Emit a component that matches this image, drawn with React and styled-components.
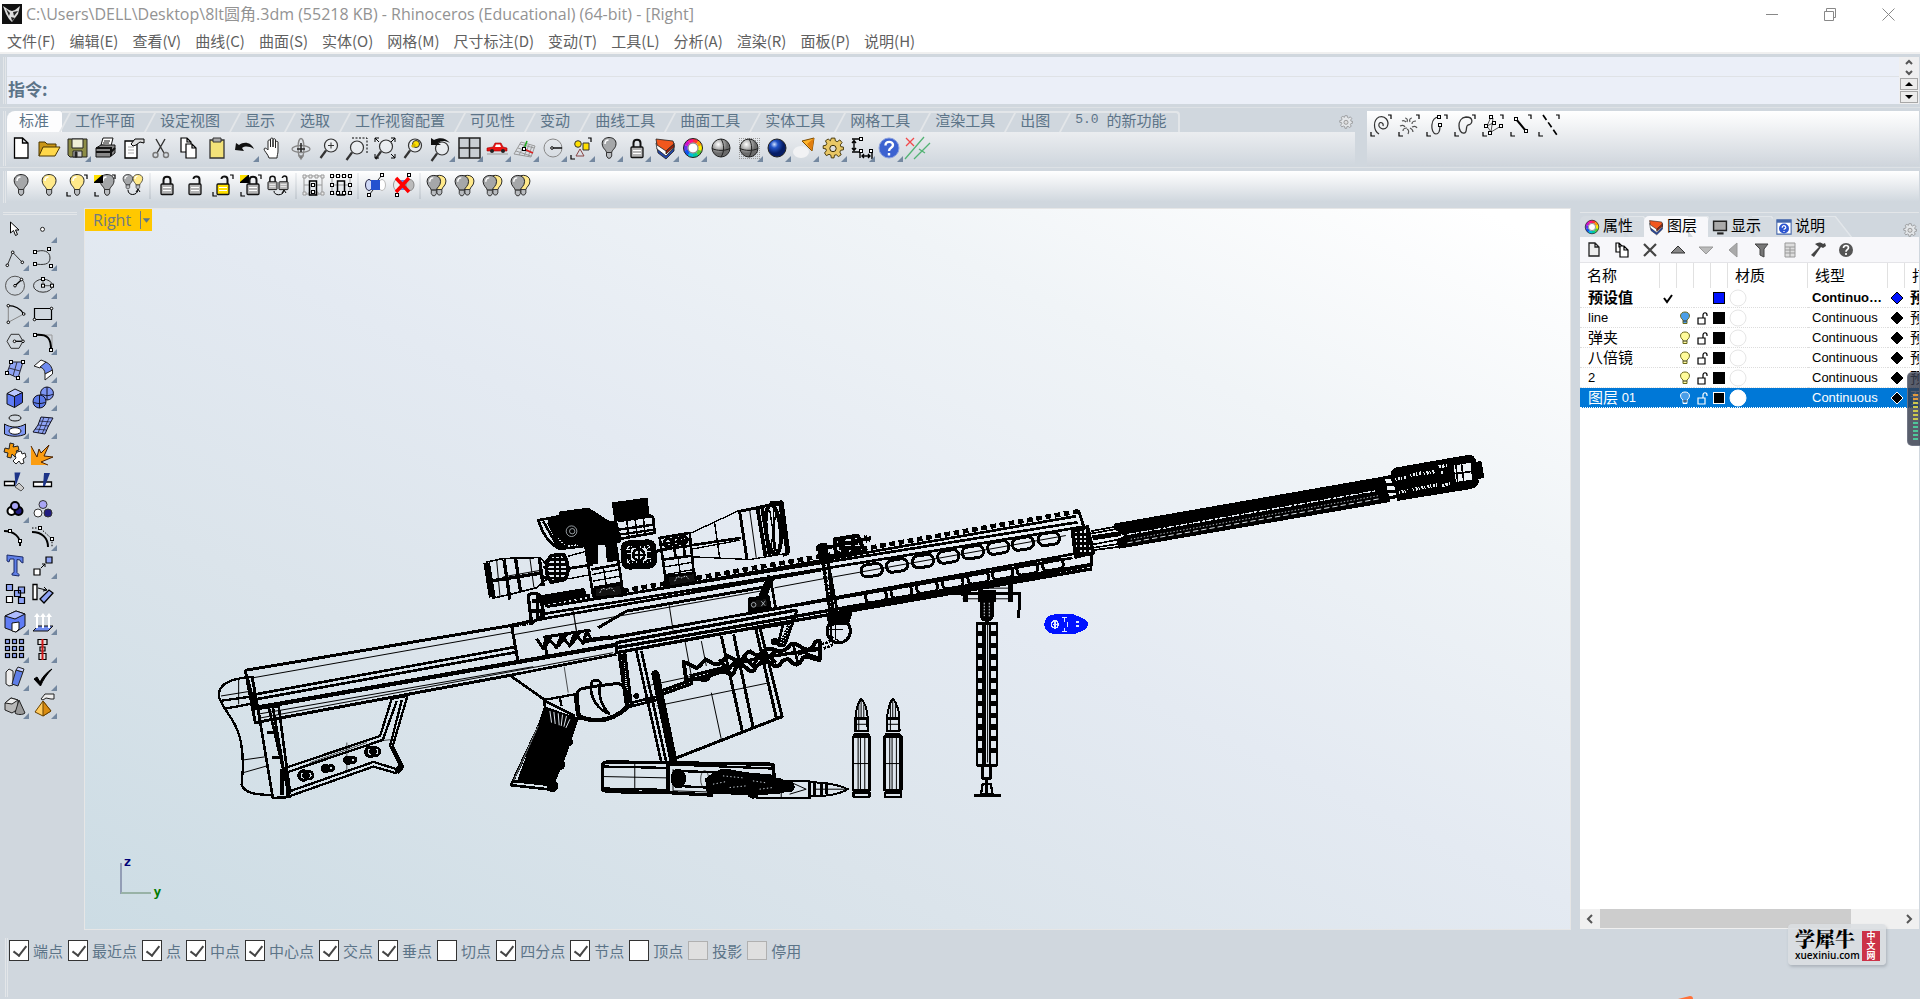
import React from 'react';
import styled, { createGlobalStyle, css } from 'styled-components';

const base = '#d0d7de';
const edge = '#e3e6e9';
const slate = '#5c7488';
const cjk = "'Noto Sans CJK SC', sans-serif";

const GlobalStyle = createGlobalStyle`
  * {
    box-sizing: border-box;
  }
  body {
    margin: 0;
    background: ${ base };
    font-family: 'Open Sans', ${ cjk };
    overflow: hidden;
  }
  button, input {
    font: inherit;
    color: inherit;
    margin: 0;
    padding: 0;
    border: 0;
    background: none;
  }
  svg {
    display: block;
    flex: none;
  }
`;

const Page = styled.div`
  display: flex;
  flex-direction: column;
  height: 100vh;
`;

// Title and menu
const TitleBar = styled.header`
  display: flex;
  align-items: center;
  height: 28px;
  padding-left: 2px;
  background: #fff;
  color: #939393;
`;

const Title = styled.h1`
  flex: 1;
  margin: 0 0 0 4px;
  font-size: 16px;
  font-weight: 400;
  line-height: 28px;
  white-space: nowrap;
`;

const WindowButton = styled.button`
  display: flex;
  justify-content: center;
  align-items: center;
  width: 58px;
  height: 28px;
  &:last-child {
    margin-right: 3px;
  }
`;

const MenuBar = styled.nav`
  display: flex;
  gap: 14px;
  height: 26px;
  padding: 1px 0 0 7px;
  background: #fff;
  border-bottom: 2px solid #f0f0f0;
  color: #606060;
`;

const MenuItem = styled.button`
  font-family: ${ cjk };
  font-size: 15px;
  line-height: 22px;
  white-space: nowrap;
`;

// Command line
const CommandPanel = styled.section`
  display: flex;
  padding: 3px 1px 3px 3px;
  border-bottom: 1px solid #dde1e5;
`;

const Grip = styled.div`
  width: 3px;
  margin-right: 1px;
  border: solid ${ edge };
  border-width: 0 1px;
`;

const CommandFields = styled.div`
  flex: 1;
  background: #ebeff8;
`;

const History = styled.div`
  height: 20px;
  border-bottom: 1px solid #dfe2e6;
`;

const Prompt = styled.div`
  display: flex;
  align-items: flex-start;
  height: 27px;
  padding: 0 1px;
  color: ${ slate };
  font-family: ${ cjk };
  font-size: 17px;
  font-weight: 700;
  line-height: 23px;
  input {
    flex: 1;
    margin-left: 6px;
    outline: none;
  }
`;

const CommandScroll = styled.div`
  display: flex;
  flex-direction: column;
  width: 20px;
  padding: 0 1px;
  background: #efeff0;
`;

const ScrollStep = styled.button`
  display: flex;
  align-items: center;
  justify-content: center;
  height: 10px;
  ${ ({ $boxed }) => $boxed && css`
    height: 12px;
    margin-top: 1px;
    background: #ececec;
    border: 1px solid #a7a7a7;
  ` }
`;

// Toolbars
const Band = styled.div`
  display: flex;
  padding: 3px 1px ${ ({ $last }) => ($last ? 4 : 1) }px 3px;
  border-bottom: 1px solid ${ ({ $last }) => ($last ? base : '#dde1e5') };
`;

const BandContent = styled.section`
  flex: 1;
  min-width: 0;
  margin-right: ${ ({ $gap }) => $gap || 0 }px;
`;

const Tabs = styled.div`
  display: flex;
  height: 21px;
`;

const Tab = styled.button`
  position: relative;
  display: flex;
  align-items: flex-start;
  height: 21px;
  padding: 0 12px 0 13px;
  border-top: 2px solid ${ edge };
  color: ${ slate };
  font-family: ${ cjk };
  font-size: 15px;
  line-height: 13px;
  white-space: nowrap;
  span {
    font-family: 'Liberation Mono', monospace;
    font-size: 13px;
    white-space: pre;
  }
  &::before {
    content: '';
    position: absolute;
    left: 2px;
    top: 0;
    width: 2px;
    height: 19px;
    background: ${ edge };
    transform: skewX(-28deg);
  }
  ${ ({ $active }) => $active && css`
    padding: 0 13px 0 12px;
    background: #fdfdfe;
    border-color: #fdfdfe;
    border-radius: 8px 3px 0 0;
    &::before {
      display: none;
    }
  ` }
  &:last-of-type {
    border-right: 2px solid ${ edge };
    border-radius: 0 4px 0 0;
  }
`;

const TabSpacer = styled.div`
  flex: 1;
`;

const GearBox = styled.div`
  display: flex;
  align-items: center;
  width: 16px;
`;

const ToolRow = styled.div`
  display: flex;
  height: ${ ({ $tall }) => ($tall ? 34 : 32) }px;
  padding-top: ${ ({ $tall }) => ($tall ? 2 : 0) }px;
  background: linear-gradient(${ ({ $tall }) => ($tall ? '#ebedf0' : '#fff') }, ${ base } 96%);
`;

const SideTools = styled.section`
  display: flex;
  width: 552px;
  height: 55px;
  background: linear-gradient(#fff, #cfd5dc);
`;

const ToolButton = styled.button`
  width: 28px;
  height: 28px;
`;

const ToolSeparator = styled.div`
  width: 2px;
  height: 26px;
  margin: 2px 2px 0;
  background: linear-gradient(#eef0f2, #c3cad1);
`;

// Work area
const Workspace = styled.main`
  display: flex;
  flex: 1;
  min-height: 0;
  padding-right: 1px;
`;

const SideBar = styled.aside`
  width: 84px;
  padding: 4px 3px 0 1px;
`;

const SideGrip = styled.div`
  height: 3px;
  margin: 0 4px 0 2px;
  border: solid ${ edge };
  border-width: 1px 0;
`;

const ToolGrid = styled.div`
  display: grid;
  grid-template-columns: 28px 28px;
`;

const Viewport = styled.section`
  position: relative;
  flex: 1;
  border: 1px solid #e6e6e6;
  background: linear-gradient(to top right, #ccdce4 0%, #dbe4eb 30%, #e4eaf2 52%, #f0f4f7 76%, #fff 97%);
`;

const ViewCanvas = styled.svg`
  width: 100%;
  height: 100%;
`;

const ViewLabel = styled.button`
  position: absolute;
  top: 0;
  left: 0;
  display: flex;
  align-items: center;
  height: 22px;
  background: #ffc800;
  color: #6f7a80;
  font-size: 16px;
  line-height: 22px;
  span {
    padding: 0 9px 0 8px;
  }
  svg {
    border-left: 1px solid #6f7a80;
  }
`;

// Layer panel
const Panel = styled.aside`
  display: flex;
  flex-direction: column;
  width: 339px;
  margin: 4px 0 1px 9px;
`;

const PanelTabs = styled.div`
  display: flex;
  align-items: flex-end;
  height: 25px;
  border-top: 1px solid ${ edge };
`;

const PanelTab = styled.button`
  position: relative;
  display: flex;
  align-items: center;
  gap: 1px;
  width: 64px;
  height: 21px;
  padding-left: 2px;
  color: #000;
  font-family: ${ cjk };
  font-size: 15px;
  line-height: 16px;
  white-space: nowrap;
  &::before {
    content: '';
    position: absolute;
    inset: 0 0 0 1px;
    border: solid #e2e6ea;
    border-width: 1px 2px 0 0;
    transform: skewX(38deg);
    transform-origin: top;
    clip-path: inset(0 0 0 50%);
    background: ${ ({ $active }) => ($active ? '#f7f7fa' : '#d5dbe1') };
  }
  &::after {
    content: '';
    position: absolute;
    inset: 0 20px 0 0;
    border-radius: 5px 0 0 0;
    background: ${ ({ $active }) => ($active ? '#f7f7fa' : '#d5dbe1') };
  }
  svg, span {
    position: relative;
    z-index: 1;
  }
  span {
    height: 20px;
  }
`;

const PanelTools = styled.div`
  display: flex;
  height: 26px;
  background: #f7f7fa;
  border-bottom: 1px solid #e4e4e8;
  ${ ToolButton } {
    height: 25px;
  }
`;

const LayerArea = styled.div`
  flex: 1;
  overflow: hidden;
  background: #fff;
`;

const LayerTable = styled.table`
  width: 384px;
  table-layout: fixed;
  border-spacing: 0;
  font-family: 'Liberation Sans', ${ cjk };
  font-size: 13px;
  th {
    height: 25px;
    padding: 0 0 0 7px;
    border-right: 1px solid #e1e1e1;
    font-weight: 400;
    text-align: left;
    font-size: 15px;
    line-height: 20px;
    white-space: nowrap;
  }
`;

const LayerRow = styled.tr`
  font-weight: ${ ({ $current }) => ($current ? 700 : 400) };
  color: ${ ({ $selected }) => ($selected ? '#fff' : '#000') };
  background: ${ ({ $selected }) => ($selected ? '#0078d7' : '#fff') };
  td {
    height: 20px;
    padding: 0;
    border-bottom: 1px dotted ${ ({ $selected }) => ($selected ? '#fff' : '#ddd') };
    white-space: nowrap;
    overflow: hidden;
  }
`;

const LayerName = styled.div`
  display: flex;
  align-items: center;
  height: 18px;
  padding-left: 8px;
  white-space: pre;
  span {
    font-size: 15px;
    line-height: 18px;
  }
`;

const LineType = styled.div`
  width: 75px;
  height: 18px;
  padding-left: 4px;
  line-height: 18px;
  overflow: hidden;
  text-overflow: ellipsis;
`;

const PrintName = styled.div`
  height: 18px;
  padding-left: 5px;
  font-size: 15px;
  line-height: 18px;
`;

const ScrollBar = styled.div`
  display: flex;
  align-items: center;
  height: 20px;
  background: #f0f0f0;
  button {
    display: flex;
    justify-content: center;
    width: 20px;
  }
`;

const ScrollTrack = styled.div`
  flex: 1;
  height: 20px;
`;

const ScrollThumb = styled.div`
  width: 84%;
  height: 19px;
  background: #cdcdcd;
`;

const SideMeter = styled.div`
  position: absolute;
  top: 372px;
  right: 0;
  width: 13px;
  height: 74px;
  padding: 21px 2px 0 5px;
  border-radius: 5px 0 0 5px;
  background: rgba(52, 58, 76, 0.82);
  border: 1px solid rgba(120, 125, 140, 0.8);
  border-right: 0;
`;

// Object snaps
const SnapBar = styled.footer`
  display: flex;
  align-items: flex-start;
  gap: 5px;
  height: 69px;
  padding: 10px 0 0 5px;
`;

const SnapGrip = styled(Grip)`
  height: 59px;
  margin: -2px -4px 0 0;
`;

const Snap = styled.label`
  display: flex;
  align-items: center;
  gap: 4px;
  color: ${ slate };
  font-family: ${ cjk };
  font-size: 15px;
  line-height: 21px;
  white-space: nowrap;
`;

const SnapBox = styled.input`
  appearance: none;
  width: 20px;
  height: 21px;
  border: 1px solid #333;
  background: #fff;
  &:checked::after {
    content: '';
    display: block;
    width: 6px;
    height: 11px;
    margin: 2px 0 0 6px;
    border: solid #444;
    border-width: 0 2px 2px 0;
    transform: rotate(38deg);
  }
  &:disabled {
    height: 19px;
    background: #dfdfdf;
    border-color: #b0b0b0;
  }
`;

const Watermark = styled.div`
  position: absolute;
  right: 34px;
  bottom: 34px;
  display: flex;
  gap: 3px;
  width: 98px;
  height: 41px;
  padding: 6px 6px 4px 7px;
  border-radius: 4px;
  background: rgba(218, 222, 226, 0.85);
  box-shadow: 1px 2px 3px rgba(90, 100, 110, 0.3);
`;

const WatermarkText = styled.div`
  display: flex;
  flex-direction: column;
  width: 64px;
  color: #000;
`;

const WatermarkName = styled.div`
  height: 20px;
  font-family: 'Noto Serif CJK SC', ${ cjk };
  font-size: 20px;
  font-weight: 900;
  line-height: 18px;
`;

const WatermarkSite = styled.div`
  font-size: 10px;
  font-weight: 600;
  line-height: 12px;
`;

const WatermarkSeal = styled.div`
  display: flex;
  flex-direction: column;
  align-items: center;
  width: 19px;
  height: 30px;
  margin-top: 1px;
  background: #cc3248;
  color: #fff;
  font-family: ${ cjk };
  font-size: 9px;
  font-weight: 700;
  line-height: 10px;
`;

const OrangeTip = styled.svg`
  position: absolute;
  right: 227px;
  bottom: 0;
`;

// Icon parts
const Sq = ({ x, y, s = 3 }) => <rect x={ x - s / 2 } y={ y - s / 2 } width={ s } height={ s } fill='#fff' stroke='#000' strokeWidth='1' />;
const Dot = ({ x, y }) => <circle cx={ x } cy={ y } r='1.3' fill='#fff' stroke='#000' />;
const Corners = () => <path d='M21 4h3v4M4 21v4h4' stroke='#000' strokeWidth='1.2' fill='none' />;

const Bulb = ({ fill = '#a5a7a9', x = 0, y = 0, s = 1 }) => (
  <g transform={ `translate(${ x } ${ y }) scale(${ s })` }>
    <path d='M11.5 18.5C11 15.500 7.200 14.500 7.200 9.500C7.200 1.500 21 1.500 21 9.500C21 14.500 17.200 15.500 16.700 18.500Z' fill={ fill } stroke='#222' strokeWidth='1' />
    <path d='M10 10C10 7.500 11.500 6 13.500 6' stroke='#fff' strokeWidth='1.500' fill='none' />
    <path d='M11.500 18.500h5.200v3.500l-1.500 2.200h-2.200l-1.500-2.200z' fill='#b9bcc0' stroke='#333' />
  </g>
);

const Lock = ({ fill = '#b5b5b5', open, x = 0, y = 0, s = 1 }) => (
  <g transform={ `translate(${ x } ${ y }) scale(${ s })` }>
    <path d={ open ? 'M18.500 14V8.500C18.500 4.500 12.500 4.500 12.500 8' : 'M10.500 14V9C10.500 4.500 17.500 4.500 17.500 9V14' } fill='none' stroke='#111' strokeWidth='2' />
    <rect x='8' y='13' width='12' height='10.500' rx='1' fill={ fill } stroke='#111' strokeWidth='1.300' />
    <path d='M10 16.500h8M10 19.500h8' stroke='#fff' strokeWidth='1' />
  </g>
);

const Magnifier = ({ x = 0, y = 0 }) => (
  <g transform={ `translate(${ x } ${ y })` } fill='none' stroke='#333'>
    <circle cx='16' cy='11.500' r='6.500' fill='rgba(255,255,255,.35)' strokeWidth='1.200' />
    <path d='M11 16.500L5.500 24' strokeWidth='2.200' />
  </g>
);

const Ball = ({ id }) => (
  <g>
    <circle cx='14' cy='14' r='9' fill={ `url(#${ id })` } stroke='#222' />
    {id === 'grayBall' && <path d='M5 14.500C10 17 18 17 23 14.500M14 5C17.500 10 17.500 18 14 23' fill='none' stroke='#222' />}
  </g>
);

const Sheet = ({ x, y, w = 10, h = 14 }) => (
  <path d={ `M${ x } ${ y }h${ w - 4 }l4 4v${ h - 4 }h${ -w }zM${ x + w - 4 } ${ y }v4h4` } fill='#fff' stroke='#000' strokeWidth='1.200' />
);

const wheelColors = ['#f33', '#f90', '#fe0', '#5c3', '#0c9', '#0bd', '#15e', '#63e', '#c1c', '#f18'];

const gearIcon = (fill, stroke) => (
  <g stroke={ stroke } fill={ fill }>
    <path d='M12 4h4l.5 3 2 1 3-2 2.500 3-2 2.500.5 2 3 .5v3l-3 .5-1 2 1.500 3-3 2-2.500-2-2 .5-.5 3h-3l-.5-3-2-1-3 1.500-2-3 2-2.500-.5-2-3-.5v-3l3-.5 1-2-1.500-3 3-2 2.500 2z' transform='translate(1.500 .5) scale(.9)' />
    <circle cx='14' cy='14.500' r='3.200' fill='#ddd' />
  </g>
);

const icons = {
  newFile: <path d='M7.500 4h8l5.500 5v15H7.500zM15.500 4v5H21' fill='#fff' stroke='#000' strokeWidth='1.300' />,
  open: <g stroke='#4b3600'><path d='M4 22V8h6l2 2h9v4' fill='#c99516' /><path d='M4 22l4-9h17l-5 9z' fill='#ffd84a' /></g>,
  save: <g stroke='#222'><path d='M5 5h19v18H7l-2-2z' fill='#8d8d46' /><path d='M9 5h11v9H9z' fill='#f0f0d8' /><path d='M10 17h9v6h-9z' fill='#ccc' /><path d='M12 18h2v5h-2z' fill='#222' /></g>,
  print: <g stroke='#111'><path d='M10 11l2-7h10l-2 8z' fill='#fff' /><path d='M5 14l5-3h14v8l-5 4H5z' fill='#888' /><path d='M5 14h15v8M5 18h15l4-4' fill='none' strokeWidth='2' /><path d='M13 7h6M12 9h6' /></g>,
  props: <g stroke='#000'><path d='M6 7h12v17H6z' fill='#fff' strokeWidth='1.300' /><path d='M9 13h6M9 16h6M9 19h6' stroke='#aaa' /><path d='M12 10l4-5h9v4l-4-1-4 3-3 1z' fill='#ddd' /></g>,
  cut: <g fill='none' stroke='#333' strokeWidth='1.400'><path d='M9 5l8 14M18 5l-8 14' /><circle cx='8.500' cy='21' r='2.500' stroke='#777' /><circle cx='19' cy='21' r='2.500' stroke='#777' /></g>,
  copy: <g><Sheet x={ 6 } y={ 4 } /><Sheet x={ 11 } y={ 10 } /></g>,
  paste: <g stroke='#333'><path d='M7 6h14v18H7z' fill='#f3e279' strokeWidth='1.300' /><path d='M10 4h8v4h-8z' fill='#aaa' /></g>,
  undo: <path d='M4 16l1-7 3 2c5-4 12-3 15 4-5-3-9-3-12-1l2 3z' fill='#111' />,
  pan: <path d='M10 24c-1-4-5-7-5-9 1-2 3 0 4 1V7c1-2 2-1 2.500 0v6V5c1-1.500 2-1.500 2.500 0v8V5.500c1-1 2-1 2.500 0V14V8c1-1 2-1 2.500 0v9c0 3-1 4-1 7z' fill='#fff' stroke='#222' />,
  rotate: <g fill='none' stroke='#888' strokeWidth='1.300'><ellipse cx='14' cy='15' rx='9' ry='3.500' /><ellipse cx='14' cy='14' rx='3' ry='9.500' /><path d='M14 9v9M10 15h8' stroke='#222' strokeWidth='1.500' /><path d='M12 22l2 3 2-3z' fill='#555' /></g>,
  zoomIn: <g><Magnifier /><path d='M13 11.500h6M16 8.500v6' stroke='#333' /></g>,
  zoomWin: <g><path d='M9 4h15v15' fill='none' stroke='#000' strokeDasharray='2 1.500' /><Magnifier x={ -2 } y={ 2 } /></g>,
  zoomExt: <g><Magnifier x={ -1 } y={ 1 } /><path d='M4 8V4h4M20 4h4v4M24 20v4h-4M4 20v4h4M4 4l4 4M24 4l-4 4M24 24l-4-4' stroke='#000' fill='none' /></g>,
  zoomSel: <g><Magnifier /><circle cx='17' cy='10' r='3.500' fill='#ffe000' stroke='#333' /><path d='M13 13l3-3' stroke='#d8b800' strokeWidth='3' /></g>,
  undoView: <g><Magnifier x={ -1 } y={ 3 } /><path d='M4 11V4l3 2c6-3 12-2 16 3-6-3-9-2-12 0l3 2z' fill='#111' /></g>,
  views: <path d='M4 4h21v20H4zM4 14h21M14.500 4v20' fill='#c9ced3' stroke='#222' strokeWidth='1.500' />,
  car: <g><path d='M4 17v-3l6-1 2-4h6l2 4 4 1v3z' fill='#ec1313' stroke='#900' strokeWidth='.6' /><path d='M12 13l1-2.500h4l1 2.500z' fill='#fff' /><circle cx='9' cy='17' r='2' fill='#222' /><circle cx='20' cy='17' r='2' fill='#222' /><path d='M4 20h21' stroke='#999' /></g>,
  cplane: <g fill='none' stroke='#999'><path d='M3 20l7-12 14 4-4 11zM7 14l14 5M5 17l15 5M9 10l14 4M8 21l6-11M13 22l5-11M17 23l4-11' /><path d='M13 15l9 4' stroke='#d22' strokeWidth='1.500' /><path d='M13 15l3-8' stroke='#2a2' strokeWidth='1.500' /><Sq x={ 13 } y={ 15 } /></g>,
  circleTool: <g fill='none'><circle cx='14' cy='14' r='9' stroke='#888' /><path d='M14 14h9' stroke='#000' strokeWidth='1.400' /><Dot x={ 13 } y={ 14 } /></g>,
  selection: <g><Corners /><circle cx='11' cy='10' r='3.300' fill='#ffe000' stroke='#333' /><path d='M16 9h6v7h-6z' fill='#ffe000' stroke='#333' /><path d='M9 22l4-7 4 7z' fill='none' stroke='#844' /></g>,
  bulb: <Bulb />,
  bulbOn: <Bulb fill='#ffe98a' />,
  bulbOnCorners: <g><Corners /><Bulb fill='#ffe98a' /></g>,
  bulbSwap: <g><Corners /><Bulb x={ 2 } /><path d='M3 4h9v8H3z' fill='#000' /><path d='M3 4h8l-8 7z' fill='#ffe000' /></g>,
  bulbPair: <g><Bulb x={ -1 } y={ 1 } s={ 0.7 } /><Bulb fill='#ffe98a' x={ 9 } y={ 1 } s={ 0.7 } /><path d='M9 19c0 6 9 6 10 0M17 21l2-3 2 3' fill='none' stroke='#000' /></g>,
  lock: <Lock />,
  unlock: <Lock open />,
  unlockCorners: <g><Corners /><Lock open fill='#ffe000' /></g>,
  lockSwap: <g><Corners /><Lock x={ 2 } /><path d='M3 4h9v8H3z' fill='#000' /><path d='M3 4h8l-8 7z' fill='#ffe000' /></g>,
  lockPair: <g><Lock x={ -3 } y={ 1 } s={ 0.75 } /><Lock open x={ 8 } y={ 1 } s={ 0.75 } /><path d='M9 20c0 5 9 5 10 0M17 22l2-3 2 3' fill='none' stroke='#000' /></g>,
  layers: (
    <g stroke='#222' strokeWidth='.8'>
      <path d='M6 14l1 5 8 6 8-8V11l-7 7z' fill='#2346a8' />
      <path d='M5 9l1 6 9 7 8-8V9z' fill='#fff' />
      <path d='M5 5l1 6 9 6 8-7-1-3z' fill='#f2571d' />
      <path d='M15 17l8-7v3l-8 7z' fill='#a01d08' />
    </g>
  ),
  wheel: (
    <g fill='none' strokeWidth='4'>
      {wheelColors.map((c, i) => (
        <path key={ c } d='M14 6.500A7.500 7.500 0 0 1 18.600 8' stroke={ c } transform={ `rotate(${ i * 36 } 14 14)` } />
      ))}
      <circle cx='14' cy='14' r='9.500' stroke='#222' strokeWidth='1' />
      <circle cx='14' cy='14' r='5' stroke='#555' strokeWidth='.8' fill='#fff' />
    </g>
  ),
  grayBall: <Ball id='grayBall' />,
  gridBall: <g><path d='M4 4h21v21H4z' fill='url(#dots)' /><Ball id='grayBall' /></g>,
  blueBall: <Ball id='blueBall' />,
  spot: <g><ellipse cx='10' cy='18' rx='8' ry='6' fill='#f1f2f4' /><path d='M11 7l12-3-2 13z' fill='#ffb52c' stroke='#7a4a00' /><path d='M16 10l7-6-2 13z' fill='#e07e10' /></g>,
  options: gearIcon('#e9c765', '#3a2c00'),
  dims: <g fill='none' stroke='#000' strokeWidth='1.400'><path d='M5 5h9M7 7v9M5 9l2-2.500L9 9M5 14l2 2.500L9 14M5 18h8v6M25 16v9M15 22h8M17 20l-2 2 2 2M21 20l2 2-2 2' /><Sq x={ 14 } y={ 5 } /><Sq x={ 14 } y={ 17 } /><Sq x={ 24 } y={ 17 } /></g>,
  help: <g><circle cx='14' cy='14' r='10' fill='#3c62d0' stroke='#8ba0dd' /><path d='M10.500 11.500c0-5 7.500-4.500 7.500-.5 0 3-4 2.500-4 6M14 19v2.500' fill='none' stroke='#fff' strokeWidth='2.400' /></g>,
  clash: <g fill='none'><path d='M3 4l8 8M11 4l-8 8' stroke='#f24a4a' strokeWidth='1.300' /><path d='M2 25L21 3M11 25L27 9M16 15l6 4' stroke='#53b374' strokeWidth='1.300' /></g>,
  cage: <g fill='none' stroke='#999'><path d='M5 5h18v18H5zM5 14h18' />{[5, 11, 17, 23].map((x) => <path key={ x } d={ `M${ x - 1 } 4h3v3h-3zM${ x - 1 } 21h3v3h-3z` } fill='#eee' />)}<path d='M10.500 10h7v14h-7z' stroke='#000' strokeWidth='1.500' /><Sq x={ 14 } y={ 14 } /><Sq x={ 14 } y={ 21 } /></g>,
  cageOn: <g fill='none' stroke='#999'><path d='M5 5h18v18H5zM5 14h18' /><path d='M10.500 10h7v14h-7z' stroke='#000' strokeWidth='1.500' />{[5, 11, 17, 23].map((x) => <g key={ x }><Sq x={ x } y={ 5 } /><Sq x={ x } y={ 22 } /></g>)}<Sq x={ 5 } y={ 14 } /><Sq x={ 23 } y={ 14 } /></g>,
  pipe: <g><path d='M8 9h13v10H8z' fill='url(#tube)' /><ellipse cx='8' cy='14' rx='3.500' ry='5.500' fill='#cfd8f6' stroke='#224' /><ellipse cx='21' cy='14' rx='3.500' ry='5.500' fill='#fff' stroke='#bbb' /><path d='M10 9h9v10h-9z' fill='#2452cf' /><path d='M8 24l4-5M17 9l4-5' stroke='#222' fill='none' /><Sq x={ 21 } y={ 4 } /><Sq x={ 8 } y={ 24 } /></g>,
  pipeOff: <g><path d='M8 9h13v10H8z' fill='#5d86e6' /><ellipse cx='8' cy='14' rx='3.500' ry='5.500' fill='#eee' stroke='#999' /><ellipse cx='21' cy='14' rx='4' ry='5.500' fill='#bbb' stroke='#888' /><Sq x={ 20 } y={ 4 } /><Sq x={ 8 } y={ 24 } /><path d='M7 7l13 14M20 7L7 21' stroke='#f00' strokeWidth='3.500' /></g>,
  bulbs: <g><Bulb fill='#ffe98a' x={ 3 } y={ 1 } s={ 0.95 } /><Bulb x={ -3 } y={ 1 } s={ 0.98 } /></g>,
  // point-edit tools
  spiral: <g fill='none' stroke='#333' strokeWidth='1.200'><Corners /><path d='M15 15c1-3-3-5-4-2-1 4 5 7 8 3 3-6-2-12-8-10-6 3-6 13 0 17' transform='translate(1 0)' /></g>,
  cluster: <g fill='none' stroke='#555' strokeWidth='1.200'><Corners /><path d='M7 10c2-1 3 0 4 1M10 7c2 0 3 2 2 4M17 7c-2 0-3 2-2 4M21 10c-2 0-4 1-4 3M22 17c-1-2-3-2-5-1M18 21c0-2-1-3-3-4M13 23c1-2 1-4-1-5M8 20c0-2 1-3 4-3M5 15c2-1 4-1 5 1' /></g>,
  cCurve: <g fill='none' stroke='#333' strokeWidth='1.200'><Corners /><path d='M16 6c-9 0-9 16-3 17 3 0 4-4 4-8' /><Sq x={ 16 } y={ 6 } /><Sq x={ 17 } y={ 14 } /></g>,
  closed: <g fill='none' stroke='#333' strokeWidth='1.300'><Corners /><path d='M15 6c8 0 7 7 2 8-3 1 0 8-4 8-6 1-8-15 2-16z' /></g>,
  net: <g fill='none' stroke='#555'><Corners /><path d='M12 6l-4 9 4 6 10-6M8 15l8-4M12 21L14 7' /><Sq x={ 12 } y={ 6 } /><Sq x={ 15 } y={ 12 } /><Sq x={ 7 } y={ 15 } /><Sq x={ 22 } y={ 15 } /><Sq x={ 11 } y={ 22 } /></g>,
  lineSeg: <g><Corners /><path d='M9 8l10 12' stroke='#000' strokeWidth='2' /><Sq x={ 9 } y={ 8 } /><Sq x={ 19 } y={ 20 } /></g>,
  lineDash: <g><Corners /><path d='M8 4l14 20' stroke='#000' strokeWidth='1.700' strokeDasharray='6 3' /></g>,
  // modelling tools
  pointer: <path d='M9.500 7v11l3-2.500 2 5 2-1-2-4.500h3.500z' fill='#fff' stroke='#000' />,
  point: <circle cx='13.500' cy='14.300' r='2' fill='#fff' stroke='#222' />,
  polyline: <g><path d='M6.300 22.300L11.700 9.300l9.600 10' fill='none' stroke='#333' /><Dot x={ 6.3 } y={ 22.3 } /><Dot x={ 11.7 } y={ 9.3 } /><Dot x={ 21.3 } y={ 19.3 } /></g>,
  curve: <g><path d='M6 9c8-3 15-1 15 6s-7 7-15 6' fill='none' stroke='#333' /><Sq x={ 6 } y={ 9 } /><Sq x={ 20 } y={ 6 } /><Sq x={ 6 } y={ 21 } /><Sq x={ 22 } y={ 23 } /></g>,
  circle: <g><circle cx='14' cy='14.700' r='9.500' fill='none' stroke='#555' /><path d='M14 14.700l6.500-6' stroke='#000' strokeWidth='1.300' /><Dot x={ 14 } y={ 14.7 } /><Dot x={ 20.5 } y={ 8.5 } /></g>,
  ellipse: <g><ellipse cx='14' cy='14.700' rx='9.500' ry='6.500' fill='none' stroke='#333' /><path d='M14 8v6.700h9' stroke='#555' fill='none' /><Sq x={ 14 } y={ 8 } /><Sq x={ 14 } y={ 14.7 } /><Sq x={ 23 } y={ 14.7 } /></g>,
  arc: <g><path d='M22.700 15L7.300 23.300V6.700' stroke='#888' fill='none' /><path d='M7.300 6.700c7 0 12 3 15.400 8.300' fill='none' stroke='#000' strokeWidth='1.300' /><Dot x={ 7.3 } y={ 6.7 } /><Dot x={ 22.7 } y={ 15 } /><Dot x={ 7.3 } y={ 23.3 } /></g>,
  rect: <g><path d='M5.500 9.500h17v11h-17z' fill='none' stroke='#000' strokeWidth='1.200' /><Dot x={ 22.5 } y={ 9.5 } /><Dot x={ 5.5 } y={ 20.5 } /></g>,
  polygon: <g><path d='M6 14.300l4-7h8l4 7-4 7h-8z' fill='none' stroke='#333' /><path d='M14 14.300h8' stroke='#000' strokeWidth='1.300' /><Dot x={ 13.5 } y={ 14.3 } /><Dot x={ 22 } y={ 14.3 } /></g>,
  fillet: <g><path d='M6 8h17v15' fill='none' stroke='#999' /><path d='M6 8c13-1 16 3 16 15' fill='none' stroke='#000' strokeWidth='2' /><Sq x={ 6 } y={ 8 } /><Sq x={ 22 } y={ 23 } /></g>,
  surface: <g><path d='M10 7h12l-5 16L6 18z' fill='#8fa4f5' stroke='#223' /><path d='M16 7l-4 14M8 13l11 3' stroke='#334' /><Sq x={ 10 } y={ 7 } /><Sq x={ 22 } y={ 7 } /><Sq x={ 6 } y={ 18 } /><Sq x={ 17 } y={ 23 } /></g>,
  blend: <g stroke='#222'><path d='M5 11l7-6 5 2-6 6z' fill='#fff' /><path d='M11 12l6-5c4 2 6 5 6.500 9L16 19c0-4-2-6-5-7z' fill='#6f8bef' /><path d='M16 19l7.500-4v4L16 25z' fill='#fff' /></g>,
  box: <g stroke='#111'><path d='M6 10.500v10.500l7.500 3.500v-11z' fill='#5f7cf5' /><path d='M6 10.500L14 6l7.500 3.500-8 4z' fill='#b9c5ff' /><path d='M13.500 13.500v11l8-5v-10z' fill='#3c54d8' /></g>,
  spheres: <g stroke='#112'><circle cx='18' cy='10.500' r='6.500' fill='#7d95f3' /><circle cx='10.500' cy='18.500' r='6.500' fill='#5d7be8' /><path d='M18 4v13M12 11c4 2 9 2 12 0M10.500 12v13M4 19c4 2 9 2 13 0' fill='none' /></g>,
  revolve: <g stroke='#111'><ellipse cx='14' cy='7' rx='6' ry='3' fill='none' /><path d='M3.500 13c6 4 15 4 21 0v10c-6 3-15 3-21 0z' fill='#7f97f3' /><ellipse cx='14' cy='20' rx='6' ry='3.300' fill='#fff' /></g>,
  mesh: <g stroke='#112' fill='#8fa4f5'><path d='M12 6l12 1-5 9-3 7-12-2 5-7z' /><path d='M9 14l11 1M15 6l-6 16M20 7l-7 16M10 10l12 1M6 18l11 1' fill='none' strokeWidth='.7' /></g>,
  puzzle: <g stroke='#222'><path d='M9 4l4 1-1 3 5-1 1 4-3 1 2 3-3 3-3-3-1 4-4-1 1-4-4-1 1-4 4 1z' fill='#f59a0c' /><path d='M16 13l4-1 1 3 3-1 1 4-3 2 1 4-3 1-2-3-3 3-3-3 3-3-1-3z' fill='#fff' /></g>,
  explode: <g><path d='M2 7v19h17l-7-3 12-5-9-1 5-11-8 8-2-4-2 8z' fill='#fb9d12' /><path d='M2 7l6 11 2-8 2 4 8-8-5 11 9 1-12 5 7 3' fill='none' stroke='#4a2000' /></g>,
  trim: <g stroke='#000'><path d='M3.500 14.500h10v4h-10z' fill='#fff' strokeWidth='1.300' /><path d='M14 20l4-4 5 5-3 3z' fill='#ccc' stroke='#555' /><path d='M13.500 5.500h6l-5 14z' fill='#1d3488' stroke='none' /></g>,
  split: <g><path d='M4.500 15h18v4.500h-18z' fill='#fff' stroke='#000' strokeWidth='1.300' /><path d='M15 6h6l-5 13h-2z' fill='#1d3488' /></g>,
  group: <g stroke='#000' strokeWidth='2'><circle cx='10.500' cy='16' r='4' fill='#fff' /><circle cx='17.500' cy='16' r='4' fill='#221d80' /><circle cx='14' cy='11' r='4' fill='#a9a5f5' /></g>,
  ungroup: <g stroke='#333'><circle cx='14' cy='9.500' r='4' fill='#a9a5f5' /><circle cx='9' cy='18' r='4' fill='#fff' /><circle cx='19' cy='18' r='4' fill='#221d80' /></g>,
  ctrlPts: <g><path d='M3 8c10 0 17 6 16 15' fill='none' stroke='#000' strokeWidth='2' /><Sq x={ 9 } y={ 8 } /><Sq x={ 19 } y={ 18 } /></g>,
  ctrlOn: <g><path d='M3 9c10 0 16 6 16 15' fill='none' stroke='#000' strokeWidth='2' /><path d='M3 5h8l12 11v8' fill='none' stroke='#000' strokeDasharray='1.500 1.500' /><Sq x={ 11 } y={ 5 } /><Sq x={ 23 } y={ 16 } /></g>,
  text: <path d='M6 4l16 2v6l-2-1-1-2-3-.5v13l2 2v1.500l-7-1v-1.500l2-1V8H9l-1 3-2-1z' fill='#5f7fe8' stroke='#1b2a66' />,
  scale: <g stroke='#000'><path d='M5 18h6v6H5z' fill='#fff' strokeWidth='1.200' /><path d='M17 6h6v6h-6z' fill='#8fa4f5' strokeWidth='1.200' /><path d='M12 17l4-4M13 13h3v3' fill='none' /></g>,
  array: <g stroke='#000' fill='#8fa4f5' strokeWidth='1.200'><path d='M5.500 5.500h6v6h-6zM17.500 8h6v6h-6zM13.500 11.500h6v6h-6zM17.500 18.500h6v6h-6z' /><path d='M5.500 17.500h6v6h-6z' fill='#fff' /></g>,
  orient: <g stroke='#000'><path d='M4 5.500h4v15H4z' fill='#fff' strokeWidth='1.300' /><path d='M11 20l9-9 4 3-9 10z' fill='#8fa4f5' strokeWidth='1.300' /><path d='M9 9l8 2M15 8l3 3-4 1' fill='none' /></g>,
  boxEdit: <g stroke='#111'><path d='M4 9l11-5 9 3v12l-9 6-11-4z' fill='#5f7cf5' /><path d='M4 9l11-5 9 3-10 5z' fill='#aebcff' /><path d='M11 16l7-1v7l-3 3-4-1z' fill='#fff' /></g>,
  normals: <g><path d='M4 24l5-5h15l-5 5z' fill='#6f8bef' stroke='#111' /><path d='M8 21V9M14 21V9M20 21V9' stroke='#fff' strokeWidth='2' /><path d='M5 10l3-4 3 4zM11 10l3-4 3 4zM17 10l3-4 3 4z' fill='#fff' /></g>,
  grid9: <g stroke='#000' fill='#8fa4f5' strokeWidth='1.200'>{[4.5, 11.5, 18.5].map((x) => [4.5, 11.5, 18.5].map((y) => <rect key={ `${ x }-${ y }` } x={ x } y={ y } width='4' height='4' />))}</g>,
  align: <g stroke='#000' strokeWidth='1.200' fill='#ddd'><path d='M9 4.500h9v5H9zM11 12h5v4h-5zM10 18.500h7v6h-7z' /><path d='M13.500 4v21' stroke='#d01818' strokeWidth='2' /></g>,
  cage2: <g stroke='#222'><path d='M5 9l3-3 4 2v14l-4 1-3-2z' fill='#eee' /><path d='M15 7l7 2-5 14-6-2z' fill='#5f7fe8' /><path d='M15 7l2-3 6 2-1 3z' fill='#c6d0ff' /></g>,
  check: <path d='M5 16l3-2 3 5C14 13 18 9 23 6 18 11 14 17 11.500 23z' fill='#000' stroke='#000' />,
  solids: <g stroke='#222'><path d='M4 12l6-5 7 2v9l-6 4-7-3z' fill='#b9b9b9' /><path d='M4 12l6-5 7 2-6 4z' fill='#eee' /><path d='M18 9l6 13c-2 2-8 2-10 0z' fill='#999' /></g>,
  pyramid: <g stroke='#6a4200'><path d='M14 10l8 10-8 5-8-4z' fill='#ffca5c' /><path d='M14 10l8 10-8 5z' fill='#d98c10' /><path d='M12 8l4-5h9v5h-3l-5-1-3 2z' fill='#eee' stroke='#222' /></g>,
  // layer panel tools
  lNew: <path d='M9 6h6l4 4v9H9zM15 6v4h4' fill='#eee' stroke='#222' strokeWidth='1.300' />,
  lCopy: <g><Sheet x={ 8 } y={ 6 } w={ 7 } h={ 9 } /><Sheet x={ 12 } y={ 9 } w={ 8 } h={ 11 } /></g>,
  lDelete: <path d='M8 7l12 12M20 7L8 19' stroke='#444' strokeWidth='2.200' />,
  lUp: <path d='M14 9l7 7H7z' fill='#888' stroke='#333' />,
  lDown: <path d='M14 17l7-7H7z' fill='#bbb' stroke='#999' />,
  lLeft: <path d='M9 13l8-7v14z' fill='#aaa' stroke='#999' />,
  lFilter: <path d='M7 7h13l-4 5v8l-4-2v-6z' fill='#777' stroke='#444' />,
  lList: <path d='M9 6h10v14H9zM9 10h10M9 13h10M9 16h10M14 10v10' fill='#ddd' stroke='#999' />,
  lTools: <path d='M11 7c3-2 6-2 8 0l2-1 1 3-3 2-2-1-7 10-3-2 8-8z' fill='#444' />,
  lHelp: <g><circle cx='14' cy='13' r='7' fill='#555' /><path d='M11.500 11c0-3.500 5-3 5-.3 0 2-2.500 1.800-2.500 4M14 16v2' fill='none' stroke='#fff' strokeWidth='1.700' /></g>,
  monitor: <g stroke='#222'><path d='M5 6h18v13H5z' fill='#aaa' strokeWidth='2' /><path d='M10 23h9' strokeWidth='3' /></g>,
  helpWin: <g><path d='M4 4h20v20H4z' fill='#fff' stroke='#46a' strokeWidth='1.500' /><path d='M4 4h20v4H4z' fill='#46a' /><circle cx='14' cy='16' r='7' fill='#2c55d0' /><path d='M11.500 15c0-4 5-3.500 5 0 0 1.500-2.500 1-2.500 3M14 19.500v1.500' fill='none' stroke='#fff' strokeWidth='1.700' /></g>,
};

const IconSvg = ({ name, size = 28, more }) => (
  <svg width={ size } height={ size } viewBox='0 0 28 28' aria-hidden='true'>
    {icons[name]}
    {more && <path d='M28 22v6h-6z' fill='#7488a0' />}
  </svg>
);

const Tool = ({ name, more }) => (
  <ToolButton type='button' aria-label={ name }>
    <IconSvg name={ name } more={ more } />
  </ToolButton>
);

const Defs = () => (
  <svg width='0' height='0' aria-hidden='true'>
    <defs>
      <radialGradient id='grayBall' cx='.35' cy='.3'><stop offset='0' stopColor='#fff' /><stop offset='1' stopColor='#6b6b6b' /></radialGradient>
      <radialGradient id='blueBall' cx='.35' cy='.3'><stop offset='0' stopColor='#cfe0ff' /><stop offset='.4' stopColor='#2355c8' /><stop offset='1' stopColor='#061d66' /></radialGradient>
      <linearGradient id='tube' x2='1'><stop offset='0' stopColor='#174bd6' /><stop offset='1' stopColor='#fff' /></linearGradient>
      <pattern id='dots' width='2' height='2' patternUnits='userSpaceOnUse'><rect width='1' height='1' fill='#999' /></pattern>
    </defs>
  </svg>
);

const menus = ['文件(F)', '编辑(E)', '查看(V)', '曲线(C)', '曲面(S)', '实体(O)', '网格(M)', '尺寸标注(D)', '变动(T)', '工具(L)', '分析(A)', '渲染(R)', '面板(P)', '说明(H)'];

const tabs = ['标准', '工作平面', '设定视图', '显示', '选取', '工作视窗配置', '可见性', '变动', '曲线工具', '曲面工具', '实体工具', '网格工具', '渲染工具', '出图'];

// A trailing + marks a button with a fly-out
const mainTools = 'newFile open save+ print props cut copy paste undo+ pan rotate zoomIn zoomWin zoomExt zoomSel undoView+ views+ car+ cplane+ circleTool+ selection+ bulb+ lock+ layers+ wheel+ grayBall gridBall+ blueBall+ spot+ options+ dims+ help+ clash'.split(' ');
const visibilityTools = 'bulb bulbOn bulbOnCorners bulbSwap bulbPair | lock unlock unlockCorners lockSwap lockPair | cage cageOn | pipe pipeOff | bulbs bulbs bulbs bulbs'.split(' ');
const pointTools = 'spiral cluster cCurve closed net lineSeg lineDash'.split(' ');
const modelTools = 'pointer point+ polyline+ curve+ circle+ ellipse+ arc+ rect+ polygon+ fillet+ surface+ blend+ box+ spheres+ revolve+ mesh+ puzzle explode trim split group+ ungroup ctrlPts ctrlOn+ text scale+ array orient boxEdit+ normals+ grid9+ align+ cage2+ check+ solids+ pyramid+'.split(' ');
const layerTools = 'lNew lCopy lDelete lUp lDown lLeft lFilter lList lTools lHelp'.split(' ');

const renderTools = (list) => list.map((item, i) => (
  item === '|'
    ? <ToolSeparator key={ i } />
    : <Tool key={ i } name={ item.replace('+', '') } more={ item.endsWith('+') } />
));

const panelTabs = [['wheel', '属性'], ['layers', '图层'], ['monitor', '显示'], ['helpWin', '说明']];

const layers = [
  { name: '预设值', current: true, color: '#0012ff' },
  { name: 'line', bulb: '#4a9ee8', color: '#000' },
  { name: '弹夹', bulb: '#fffb9a', color: '#000' },
  { name: '八倍镜', bulb: '#fffb9a', color: '#000' },
  { name: '2', bulb: '#fffb9a', color: '#000' },
  { name: '图层', suffix: ' 01', bulb: '#4a9ee8', color: '#000', selected: true },
];

const snaps = [['端点', 1], ['最近点', 1], ['点', 1], ['中点', 1], ['中心点', 1], ['交点', 1], ['垂点', 1], ['切点', 0], ['四分点', 1], ['节点', 1], ['顶点', 0], ['投影', 2], ['停用', 2]];

const Gear = () => (
  <svg width='14' height='14' viewBox='3 3 22 22'>{gearIcon('#e3e6e9', '#777')}</svg>
);

const Chevron = ({ d }) => (
  <svg width='10' height='10' viewBox='0 0 10 10' fill='none' stroke='#555' strokeWidth='2'><path d={ d } /></svg>
);

// Wireframe model, drawn at three units per canvas pixel
const upperSlots = [[217, 212], [293, 198], [371, 185], [447, 171], [521, 158], [597, 144], [671, 132], [749, 118]];
const lowerSlots = [[230, 291], [306, 277], [383, 263], [460, 249], [537, 235], [610, 221], [684, 208], [761, 195]];

const Stock = () => (
  <g transform='translate(200 540) scale(.33333)' fill='none' stroke='#000' strokeWidth='7' strokeLinejoin='round'>
    <path d='M155 412C95 418 55 430 55 470C62 505 112 545 122 610C134 680 125 700 124 738C135 765 175 766 215 768' />
    <path d='M58 485L165 470M75 508L160 492' />
    <path d='M115 420V495M62 470L155 455M130 662L200 652M130 700L200 680' strokeWidth='3' />
    <path d='M135 393L935 258L990 245M135 393L165 550L930 408M155 410L180 548M140 410L165 510' strokeWidth='9' />
    <path d='M148 468L945 323M150 483L950 338' strokeWidth='8' />
    <path d='M165 506L1250 316' strokeWidth='13' />
    <path d='M930 408L1250 345' strokeWidth='8' />
    <path d='M160 415L935 278M170 525L1000 382M180 536L1240 340' strokeWidth='3' />
    <path d='M180 550L218 777L268 773L205 502M235 500L270 765M218 505L250 690M160 510L235 500' strokeWidth='8' />
    <path d='M245 690V768M258 690L264 770' strokeWidth='12' />
    <path d='M200 580h30M215 655h30' strokeWidth='11' />
    <path d='M250 688L540 590L575 478M258 700L548 602L590 485' />
    <path d='M265 772L520 682L588 702L608 682L578 620L622 470M272 755L520 668L590 690L598 676L570 620L605 482M575 478L620 470' />
    <path d='M590 700L606 680' strokeWidth='16' />
    <path d='M440 610V700M330 670L500 610M540 605L580 600' strokeWidth='2' />
    {[[310, 709], [376, 688], [443, 663], [511, 638]].map(([x, y], i) => (
      <g key={ x } strokeWidth='10'>
        <circle cx={ x } cy={ y } r={ i % 3 ? 9 : 14 } />
        <circle cx={ x + 16 } cy={ y - 1 } r={ i % 3 ? 8 : 12 } strokeWidth='8' />
        <circle cx={ x + 4 } cy={ y } r='3' fill='#000' />
      </g>
    ))}
    <path d='M935 260L955 370' strokeWidth='9' />
    <path d='M938 258L1000 248' strokeWidth='14' strokeDasharray='5 2' />
    <path d='M930 408L1035 482' strokeWidth='8' />
    <path d='M1093 382L1105 460M1120 210L1132 290' strokeWidth='2' />
    <path d='M1010 298L1030 328L1040 290L1070 325L1085 288L1110 320L1125 280L1150 312L1160 275L1175 300L1230 292M1035 290L1040 350M1040 292L1172 272M1055 290L1035 325M1100 285L1075 322M1140 278L1115 315' strokeWidth='9' />
    <path d='M1150 305L1230 294' strokeWidth='13' />
    <path d='M1032 482L1130 464L1140 540L1120 535L1035 505ZM1080 475L1085 500M1035 485L1125 530' />
    <path d='M1128 465L1136 530' strokeWidth='14' />
    <path d='M1035 505L1130 545L1112 600L1095 650L1060 735L955 725L1020 550Z' fill='#000' />
    <path d='M1050 515l5 35M1062 518l4 36M1075 522l3 36M1088 526l-4 34M1100 530l-8 32M1110 540l-12 26' stroke='#dde5ed' strokeWidth='3' />
    <path d='M1035 505L1022 548L933 738L1060 752M935 725L1060 738' strokeWidth='8' />
    <path d='M1015 560L942 722' stroke='#c3ccd4' strokeWidth='3' strokeDasharray='3 2' />
    <path d='M1105 605L1090 665L1060 740' strokeWidth='4' strokeDasharray='20 5' />
    <g fill='#000'><circle cx='1106' cy='608' r='10' /><circle cx='1082' cy='677' r='11' /><circle cx='1058' cy='741' r='14' /></g>
    <path d='M1140 450L1175 442L1255 432Q1282 440 1285 490C1265 530 1225 545 1190 545C1165 543 1145 538 1135 530L1132 460Z' strokeWidth='9' />
    <path d='M1135 530C1180 550 1235 550 1288 500' strokeWidth='13' />
    <path d='M1175 430C1180 420 1200 420 1202 432C1195 465 1200 495 1228 523C1200 515 1165 475 1175 430Z' strokeWidth='8' />
  </g>
);

const Receiver = () => (
  <g transform='translate(460 480) scale(.33333)' fill='none' stroke='#000' strokeWidth='8' strokeLinejoin='round'>
    <path d='M490 334L1858 95' strokeWidth='14' strokeDasharray='17 11' />
    <path d='M490 346L1850 110M260 382L1855 128M240 405L1870 142M160 438L250 418L1085 272' strokeWidth='8' />
    <path d='M500 395L930 320L935 290M415 445L500 395' strokeWidth='9' />
    <path d='M165 465L930 330M640 440L1080 365M945 325L1090 298L1820 168' strokeWidth='3' />
    <path d='M450 478L1850 222M390 485L1840 235' strokeWidth='8' />
    <path d='M470 490L1010 392M470 505L1000 412L1895 255M470 520L900 442L1898 268' strokeWidth='10' />
    <path d='M628 375L642 465M340 395L350 455' strokeWidth='3' />
    <path d='M470 488V525M935 310L948 385M1012 390L1000 430' />

    {/* rear block and charging handle */}
    <path d='M205 350C215 335 240 340 245 360L250 410L215 430ZM215 365h40M210 395h45M232 345v75' strokeWidth='10' />
    <path d='M240 352L370 330L378 348L245 375Z' fill='#000' />
    <path d='M255 375L390 350' strokeWidth='14' strokeDasharray='10 6' />
    <path d='M935 290L905 360' strokeWidth='24' />
    <path d='M870 360L925 352L930 385L870 392Z' strokeWidth='12' fill='#111' />
    <circle cx='882' cy='376' r='7' stroke='#dde5ed' strokeWidth='2' />
    <path d='M905 365l12 14M917 364l-12 16' stroke='#dde5ed' strokeWidth='2' />

    {/* scope */}
    <path d='M80 250L97 353' strokeWidth='20' />
    <path d='M78 248L130 237L240 234L265 260M95 357L150 345L230 325L260 300' strokeWidth='5' />
    <path d='M110 242l10 108M210 236l12 88M130 292L245 272' strokeWidth='3' />
    <path d='M132 240L150 360M167 238L182 338M238 234L250 320M90 305L250 280' strokeWidth='10' />
    <path d='M275 228C255 245 255 290 275 308L315 300C330 280 325 240 310 225Z' strokeWidth='11' />
    <path d='M265 240h55M262 254h60M262 268h62M264 282h58M270 296h50M285 225v85M300 225v82M250 250l20-12M250 262l15 8M248 290l20 10' strokeWidth='8' />
    <path d='M325 230L380 215M325 265L390 255M325 298L395 285M480 250L500 245M580 215L610 208M695 160L840 92M690 210L840 182M700 232L870 240L980 222M765 130L780 235' strokeWidth='4' />
    <path d='M320 268L400 255M580 218L620 210M690 198L845 175' strokeWidth='8' />
    <path d='M375 190L400 350L490 340L465 175M440 180L450 245M395 270L475 255M402 325L485 310' />
    <path d='M397 285L478 270M400 305L480 290M430 260l10 60' strokeWidth='4' />
    <path d='M375 185L385 250H410V190H440L445 245L470 240L465 165Z' fill='#000' />
    <path d='M405 325L485 315L488 348L405 355Z' fill='#111' />
    <path d='M420 340l8-14 12 4 14-6 10 12' stroke='#cfd8e0' strokeWidth='3' strokeDasharray='5 4' />
    <path d='M235 122L300 110V100L385 88L450 130L465 128L475 185L370 200L300 208C260 190 245 150 235 122Z' />
    <path d='M265 118L300 112V100L385 88L450 130L465 128L480 185L370 200L300 208C275 190 300 185 265 118Z' fill='#000' />
    <circle cx='335' cy='155' r='16' stroke='#dde5ed' strokeWidth='2' /><circle cx='337' cy='155' r='8' stroke='#dde5ed' strokeWidth='2' />
    <path d='M292 175l22 20M325 200l28-4' stroke='#dde5ed' strokeWidth='4' strokeDasharray='5 4' />
    <path d='M250 125L290 195M265 128L300 200' />
    <path d='M460 72L560 58L565 105L580 112L585 160L480 178L468 125Z' />
    <path d='M460 72L560 58L565 105L470 122Z' fill='#000' />
    <path d='M475 125L580 110M478 150L583 135M480 165L585 150' strokeWidth='7' />
    <path d='M500 115l8 60M525 112l8 60M550 108l6 58' strokeWidth='5' />
    <rect x='492' y='190' width='90' height='70' rx='16' strokeWidth='18' transform='rotate(-3 535 225)' />
    <rect x='508' y='201' width='60' height='49' rx='14' strokeWidth='10' strokeDasharray='9 2' />
    <circle cx='537' cy='226' r='17' strokeWidth='8' /><path d='M520 226h36M537 208v36' strokeWidth='5' />
    <path d='M600 175L690 160L705 310L620 318ZM602 195L690 180M605 210L695 198M612 240L700 228M640 170l8 68M668 165l8 70' />
    <path d='M615 262L700 248M620 285L702 270M655 240l8 45' strokeWidth='4' />
    <circle cx='625' cy='190' r='12' strokeWidth='9' /><circle cx='648' cy='186' r='12' strokeWidth='9' /><circle cx='670' cy='182' r='12' strokeWidth='9' />
    <path d='M622 290L705 280L710 308L628 322Z' fill='#111' />
    <path d='M645 305l8-14 12 4 14-6 8 10' stroke='#cfd8e0' strokeWidth='3' strokeDasharray='5 4' />
    <path d='M840 95L890 85L960 70L985 222L970 228M840 95L862 238' strokeWidth='9' />
    <path d='M870 90l20 145' strokeWidth='3' />
    <path d='M893 82L918 232M907 80L930 228' strokeWidth='11' />
    <path d='M932 72L965 70L985 220' strokeWidth='15' />
    <ellipse cx='941' cy='150' rx='22' ry='74' strokeWidth='12' transform='rotate(-6 941 150)' />
    <path d='M930 90L950 215M942 80L944 220M950 90L935 200' strokeWidth='4' />

    {/* magazine well and magazine */}
    <path d='M478 525L500 680M495 520L515 678' strokeWidth='9' />
    <path d='M487 525L508 680' strokeWidth='12' strokeDasharray='4 2' />
    <path d='M530 515L605 850M545 515L620 850M500 685L600 660M515 670L600 650' />
    <circle cx='530' cy='650' r='5' fill='#000' />
    <path d='M587 585L640 840' strokeWidth='24' strokeLinecap='round' />
    <path d='M640 840L968 712L900 440M950 715L888 445M785 470L848 755M822 465L880 742' strokeWidth='9' />
    <path d='M675 480L695 590M725 485L740 560M755 640L785 780M560 620L700 590M590 680L930 610' strokeWidth='3' />
    <path d='M600 648L700 612M600 636L690 604' strokeWidth='9' />
    <path d='M605 642L700 608' strokeWidth='9' strokeDasharray='8 5' />
    <path d='M672 548L680 605C700 600 710 596 720 598C735 608 745 602 750 590C770 580 790 576 800 578C815 592 822 588 826 570C840 552 850 556 860 566C876 582 884 578 890 560C905 548 920 545 935 552C950 568 960 560 968 545C985 535 990 540 1000 552C1015 562 1022 550 1030 535C1045 525 1060 540 1080 542L1080 485C1068 482 1065 492 1060 502C1048 518 1035 510 1020 500C1000 488 992 492 988 502C970 520 955 518 940 510C925 505 915 510 908 522C895 534 885 526 872 516C860 518 855 528 848 540C838 550 825 542 805 530C795 532 790 545 782 552C765 562 755 548 738 540C725 550 722 562 710 566C695 560 690 552 672 548Z' strokeWidth='12' />
    <path d='M680 600C740 600 800 560 860 545C930 530 1000 520 1080 510M690 590l100-25M780 540l35 45M830 540l-30 40M850 530l40 40M910 510l-30 50M900 510l50 40M955 510l-60 45M860 545l90-20' strokeWidth='10' />
    <path d='M1000 490l15 60M1015 525l60-20M1020 515l55 20' strokeWidth='8' />
    <path d='M1080 510C1110 505 1130 490 1135 480M1085 495C1110 490 1115 480 1120 470' strokeWidth='8' strokeDasharray='8 4' />
    <path d='M905 445L1000 430M970 435L955 500M1012 395L975 500M955 500L975 500' />
    <path d='M990 440L965 500' strokeWidth='16' strokeDasharray='6 2' />
    <circle cx='945' cy='487' r='7' fill='#000' />

    {/* front clamp */}
    <path d='M1075 200L1100 195L1125 435M1085 200L1115 430M1100 215L1135 405' />
    <path d='M1088 230L1118 430' strokeWidth='12' strokeDasharray='8 4' />
    <path d='M1075 215C1072 195 1090 190 1100 205L1235 175M1080 235L1215 215' strokeWidth='11' />
    <path d='M1085 205V235' strokeWidth='20' />
    <path d='M1125 180L1195 168L1215 215L1130 232Z' strokeWidth='12' />
    <path d='M1135 190h60M1140 205h65M1150 175v50M1180 170v50M1132 222h75' strokeWidth='11' />
    <path d='M1222 165v24M1212 177h24M1215 168l16 18' strokeWidth='4' />
    <path d='M1105 410L1175 400L1165 432L1110 435Z' fill='#000' />
    <circle cx='1138' cy='455' r='35' strokeWidth='9' />
    <path d='M1115 430v48M1128 432v50M1105 450h45' strokeWidth='4' />
  </g>
);

const Handguard = () => (
  <g transform='translate(800 500) scale(.33333)' fill='none' stroke='#000' strokeWidth='7' strokeLinejoin='round'>
    {upperSlots.map(([x, y]) => (
      <rect key={ x } x={ x - 32 } y={ y - 18 } width='64' height='36' rx='17' strokeWidth='9' transform={ `rotate(-9 ${ x } ${ y })` } />
    ))}
    {lowerSlots.map(([x, y]) => (
      <rect key={ x } x={ x - 31 } y={ y - 16 } width='62' height='32' rx='13' strokeWidth='9' transform={ `rotate(-9 ${ x } ${ y })` } />
    ))}
    <path d='M838 32L855 85M878 165V197L150 332L80 345' strokeWidth='9' />
    <path d='M820 95L865 82L882 160L830 172Z' strokeWidth='11' />
    <path d='M825 105h48M826 118h50M828 132h50M830 146h50M832 160h48M838 90v78M852 88v80M866 88v78' strokeWidth='8' />
    <path d='M465 265L500 258L490 285L468 283Z' fill='#000' />
    <path d='M490 298H635M495 266H640' strokeWidth='3' />
    <path d='M470 282H665M662 282L658 357' strokeWidth='9' />
    <path d='M498 258V308M635 253V308' strokeWidth='15' />
    <path d='M540 275H586V305H580V350C575 368 550 368 545 350V305H540Z' fill='#000' />
    <path d='M555 310v40M570 310v45' stroke='#dde5ed' strokeWidth='3' strokeDasharray='5 4' />
    <path d='M533 372H593V798H533Z' strokeWidth='8' />
    <path d='M552 370V835M573 370V835' />
    <path d='M556 375V795' strokeWidth='8' />
    <path d='M565 375V790' strokeWidth='3' />
    <path d='M540 395V770M583 395V765' strokeWidth='14' strokeDasharray='16 19' />
    <path d='M550 800V838H574V800M562 835V855M550 855H575L580 885H545ZM562 855V885' />
    <path d='M524 888H605' strokeWidth='10' />
    {[0, 95].map((dx) => (
      <g key={ dx } transform={ `translate(${ dx } 0)` }>
        <path d='M168 655C170 630 176 610 185 598C196 610 203 630 205 655Z' strokeWidth='6' />
        <path d='M185 600V655M178 615V655M193 615V655M169 675h35M178 660v35' strokeWidth='3' />
        <path d='M168 658H204L205 695H168ZM163 705H208M160 712H211V872H160ZM162 880H210V893H162Z' />
        <path d='M161 710H211M161 874H211' strokeWidth='10' />
        <path d='M176 715V870M196 715V870M183 715V870M160 793H210' strokeWidth='3' />
        <path d='M208 715V870' strokeWidth='7' />
      </g>
    ))}
    <g fill='#0012ff' stroke='none'>
      <path d='M766 345H825L840 352C855 355 867 368 867 374C865 385 855 395 840 398L825 404H766C725 402 725 347 766 345Z' />
      <g stroke='#dfe8ff' strokeWidth='4' fill='none'>
        <ellipse cx='767' cy='375' rx='10' ry='11' /><path d='M767 366v18M762 375h10M788 355h16M796 355v12M788 397h16M796 385v12M806 368v16' /><path d='M836 366v6M836 378v6' strokeWidth='8' />
      </g>
    </g>
  </g>
);

const Barrel = () => (
  <g transform='translate(1040 430) scale(.33333)' fill='none' stroke='#000' strokeWidth='5' strokeLinejoin='round'>
    <path d='M155 305L230 291M155 312L235 298M160 355L240 343M160 362L240 352M160 345L238 330' />
    <path d='M160 325L245 312' strokeWidth='15' />
    <path d='M228 284L1035 143L1052 215L240 355L235 330L262 320L228 298Z' fill='#000' />
    <path d='M265 315L1015 183' stroke='#dfe6ec' strokeWidth='4' strokeDasharray='22 5 9 4' />
    <path d='M275 329L1020 198' stroke='#b9c0c7' strokeWidth='3' strokeDasharray='4 6' />
    <path d='M265 340L1025 207' stroke='#dfe6ec' strokeWidth='3' strokeDasharray='16 9' />
    <path d='M1035 145L1065 140M1040 165h30M1045 185h30M1050 205L1080 200' strokeWidth='10' />
    <path d='M1062 160C1056 130 1058 118 1078 115L1290 78C1305 78 1310 88 1312 100L1318 158C1315 170 1305 174 1295 176L1078 211L1072 175Z' fill='#000' />
    <path d='M1070 150L1105 143M1115 138L1148 130M1155 132L1188 126M1080 188L1108 183M1122 180L1195 166' stroke='#e6ecf0' strokeWidth='10' strokeDasharray='3 6 6 3' />
    <path d='M1200 112l25-5M1206 128h10M1210 168l25-6' stroke='#e6ecf0' strokeWidth='9' strokeDasharray='7 4' />
    <path d='M1242 106L1298 96L1303 152L1250 160Z' fill='#edf2f5' />
    <path d='M1268 98L1276 160M1240 133L1310 124M1252 104l5 54' />
    <path d='M1315 100L1326 98L1333 142L1320 145Z' fill='#000' strokeWidth='7' />
  </g>
);

const SpareParts = () => (
  <g transform='translate(460 480) scale(.33333)' fill='none' stroke='#000' strokeWidth='7' strokeLinejoin='round'>
    <path d='M428 860C430 848 436 848 450 848L940 855L945 900M428 855V930C430 938 440 938 620 940L760 948' strokeWidth='10' />
    <path d='M432 862L620 866M430 928L620 932M620 855L940 868' />
    <path d='M625 850V938' strokeWidth='10' />
    <path d='M430 892L620 896M525 850V938M640 870V935M640 935L800 940' strokeWidth='3' />
    <path d='M640 875L800 880M650 920L740 925' />
    <ellipse cx='656' cy='898' rx='20' ry='26' fill='#000' />
    <ellipse cx='735' cy='900' rx='12' ry='26' strokeWidth='2' />
    <path d='M740 900C760 885 780 870 800 872L900 890L960 900L990 912L1000 930L960 940L890 945L800 942L745 942Z' fill='#000' />
    <path d='M780 875L940 890L935 935L780 930Z' fill='#000' />
    <path d='M760 915l40-8M810 925l50-5M880 905l40 6M900 930l40-5M790 890l60 6' stroke='#c8d1da' strokeWidth='3' strokeDasharray='4 7' />
    <path d='M890 957L1050 958V905L960 905M1045 908L1100 912C1125 916 1150 922 1165 930C1150 940 1125 946 1100 949L1050 952M870 930L895 955' strokeWidth='6' />
    <path d='M1050 905V955M1065 912V950M1085 915V950M1100 915V945' strokeWidth='9' />
    <path d='M1065 930H1160M1000 912L1040 930L990 945M965 905V957' strokeWidth='3' />
    <circle cx='988' cy='922' r='14' fill='#000' /><circle cx='880' cy='940' r='15' fill='#000' />
  </g>
);

const Axis = () => (
  <g fontFamily="'DejaVu Sans Mono', monospace" fontSize='13' fontWeight='700'>
    <path d='M121 864V895' stroke='#929db5' strokeWidth='2' />
    <path d='M121 894H151' stroke='#98b2a6' strokeWidth='2' />
    <text x='123' y='867' fill='#000078'>z</text>
    <text x='153' y='897' fill='#007a00'>y</text>
  </g>
);

const Model = () => (
  <ViewCanvas viewBox='85 209 1486 721' shapeRendering='crispEdges' role='img' aria-label='Right view'>
    <Stock />
    <Receiver />
    <Handguard />
    <Barrel />
    <SpareParts />
    <Axis />
  </ViewCanvas>
);

const LayerLine = ({ layer }) => {
  const ink = layer.selected ? '#fff' : '#000';
  return (
    <LayerRow $current={ layer.current } $selected={ layer.selected }>
      <td>
        <LayerName>
          {/^\w/.test(layer.name) ? layer.name : <span>{layer.name}</span>}
          {layer.suffix}
        </LayerName>
      </td>
      <td>{layer.current && <svg width='17' height='16' viewBox='0 0 17 16'><path d='M4 8l3 4 5-7' fill='none' stroke='#000' strokeWidth='2' /></svg>}</td>
      <td>
        {layer.bulb && (
          <svg width='17' height='16' viewBox='0 0 17 16'><path d='M6 10C2 7 3 2 8 2s6 5 2 8v3.500H6z' fill={ layer.bulb } stroke={ layer.selected ? '#fff' : '#6b6a1c' } /><path d='M6 11h4' stroke='#333' /></svg>
        )}
      </td>
      <td>
        {layer.bulb && (
          <svg width='17' height='16' viewBox='0 0 17 16' fill='none' stroke={ ink } strokeWidth='1.200'><path d='M4 8h7v6H4zM9 8V5c0-3 4-3 4 0v1' /></svg>
        )}
      </td>
      <td><svg width='17' height='16' viewBox='0 0 17 16'><rect x='2.500' y='2.500' width='11' height='11' fill={ layer.color } stroke={ ink } /></svg></td>
      <td><svg width='20' height='18' viewBox='0 0 20 18'><circle cx='10' cy='9' r='8' fill='#fff' stroke={ layer.selected ? '#fff' : '#e6e6e6' } /></svg></td>
      <td><LineType>Continuous</LineType></td>
      <td><svg width='17' height='16' viewBox='0 0 17 16'><path d='M9 2l6 6-6 6-6-6z' fill={ layer.color } stroke={ ink } /></svg></td>
      <td><PrintName>预设值</PrintName></td>
    </LayerRow>
  );
};

const App = () => {
  return (
    <Page>
      <GlobalStyle />
      <TitleBar>
        <svg width='20' height='20' viewBox='0 0 20 20'>
          <rect width='20' height='20' fill='#111' />
          <path d='M1 2l6 4 3 1 3-1 5-4-2 8-3 4-3 4-3-3-3-5z' fill='#ddd' />
          <path d='M4 5l4 4-1 3zM11 8l5-1-4 5zM9 13l4 1-3 3z' fill='#222' />
        </svg>
        <Title>C:\Users\DELL\Desktop\8lt圆角.3dm (55218 KB) - Rhinoceros (Educational) (64-bit) - [Right]</Title>
        <WindowButton type='button' aria-label='Minimize'><svg width='12' height='12'><path d='M0 6.500h12' stroke='#888' /></svg></WindowButton>
        <WindowButton type='button' aria-label='Restore'><svg width='13' height='13' fill='none' stroke='#888'><path d='M.5 3.500h9v9h-9zM2.500 3.500v-3h9v9h-2' /></svg></WindowButton>
        <WindowButton type='button' aria-label='Close'><svg width='13' height='13' stroke='#888'><path d='M.5.5l12 12M12.500.5l-12 12' /></svg></WindowButton>
      </TitleBar>
      <MenuBar>
        {menus.map((m) => <MenuItem key={ m } type='button'>{m}</MenuItem>)}
      </MenuBar>
      <CommandPanel>
        <Grip />
        <CommandFields>
          <History />
          <Prompt>
            <label htmlFor='command'>指令:</label>
            <input id='command' type='text' />
          </Prompt>
        </CommandFields>
        <CommandScroll>
          <ScrollStep type='button' aria-label='Scroll up'><Chevron d='M2 7l3-3 3 3' /></ScrollStep>
          <ScrollStep type='button' aria-label='Scroll down'><Chevron d='M2 4l3 3 3-3' /></ScrollStep>
          <ScrollStep type='button' $boxed aria-label='Previous'><svg width='8' height='6'><path d='M4 1l4 4H0z' /></svg></ScrollStep>
          <ScrollStep type='button' $boxed aria-label='Next'><svg width='8' height='6'><path d='M4 5l4-4H0z' /></svg></ScrollStep>
        </CommandScroll>
      </CommandPanel>
      <Band>
        <Grip />
        <BandContent $gap={ 12 }>
          <Tabs>
            {tabs.map((t, i) => <Tab key={ t } type='button' $active={ i === 0 }>{t}</Tab>)}
            <Tab type='button'><span>5.0 </span>的新功能</Tab>
            <TabSpacer />
            <GearBox><Gear /></GearBox>
          </Tabs>
          <ToolRow $tall>{renderTools(mainTools)}</ToolRow>
        </BandContent>
        <SideTools>{renderTools(pointTools)}</SideTools>
      </Band>
      <Band $last>
        <Grip />
        <BandContent>
          <ToolRow>{renderTools(visibilityTools)}</ToolRow>
        </BandContent>
      </Band>
      <Workspace>
        <SideBar>
          <SideGrip />
          <ToolGrid>{renderTools(modelTools)}</ToolGrid>
        </SideBar>
        <Viewport>
          <Model />
          <ViewLabel type='button'>
            <span>Right</span>
            <svg width='12' height='18' viewBox='0 0 12 18'><path d='M2 7h8l-4 5z' fill='#5c7488' /></svg>
          </ViewLabel>
        </Viewport>
        <Panel>
          <PanelTabs>
            {panelTabs.map(([icon, label]) => (
              <PanelTab key={ label } type='button' $active={ icon === 'layers' }>
                <IconSvg name={ icon } size={ 20 } />
                <span>{label}</span>
              </PanelTab>
            ))}
            <TabSpacer />
            <GearBox><Gear /></GearBox>
          </PanelTabs>
          <PanelTools>{renderTools(layerTools)}</PanelTools>
          <LayerArea>
            <LayerTable>
              <colgroup>
                {[80, 17, 17, 17, 17, 80, 80, 17, 59].map((w, i) => <col key={ i } width={ w } />)}
              </colgroup>
              <thead>
                <tr><th>名称</th><th /><th /><th /><th /><th>材质</th><th>线型</th><th /><th>打印</th></tr>
              </thead>
              <tbody>
                {layers.map((l) => <LayerLine key={ l.name } layer={ l } />)}
              </tbody>
            </LayerTable>
          </LayerArea>
          <ScrollBar>
            <button type='button' aria-label='Scroll left'><Chevron d='M7 1L3 5l4 4' /></button>
            <ScrollTrack><ScrollThumb /></ScrollTrack>
            <button type='button' aria-label='Scroll right'><Chevron d='M3 1l4 4-4 4' /></button>
          </ScrollBar>
        </Panel>
      </Workspace>
      <SnapBar>
        <SnapGrip />
        {snaps.map(([label, state]) => (
          <Snap key={ label }>
            <SnapBox type='checkbox' defaultChecked={ state === 1 } disabled={ state === 2 } />
            {label}
          </Snap>
        ))}
      </SnapBar>
      <SideMeter>
        <svg width='5' height='48'>
          {Array.from({ length: 12 }, (_, i) => (
            <rect key={ i } y={ i * 4 } width='5' height='2' fill={ i < 2 ? '#e09a3e' : i < 7 ? '#cdc84e' : '#4fc79a' } />
          ))}
        </svg>
      </SideMeter>
      <Watermark>
        <WatermarkText>
          <WatermarkName>学犀牛</WatermarkName>
          <WatermarkSite>xuexiniu.com</WatermarkSite>
        </WatermarkText>
        <WatermarkSeal><span>中</span><span>文</span><span>网</span></WatermarkSeal>
      </Watermark>
      <OrangeTip width='15' height='3'><path d='M0 3L12 0q3 0 3 3z' fill='#ff7038' /></OrangeTip>
      <Defs />
    </Page>
  );
};

export default App;
